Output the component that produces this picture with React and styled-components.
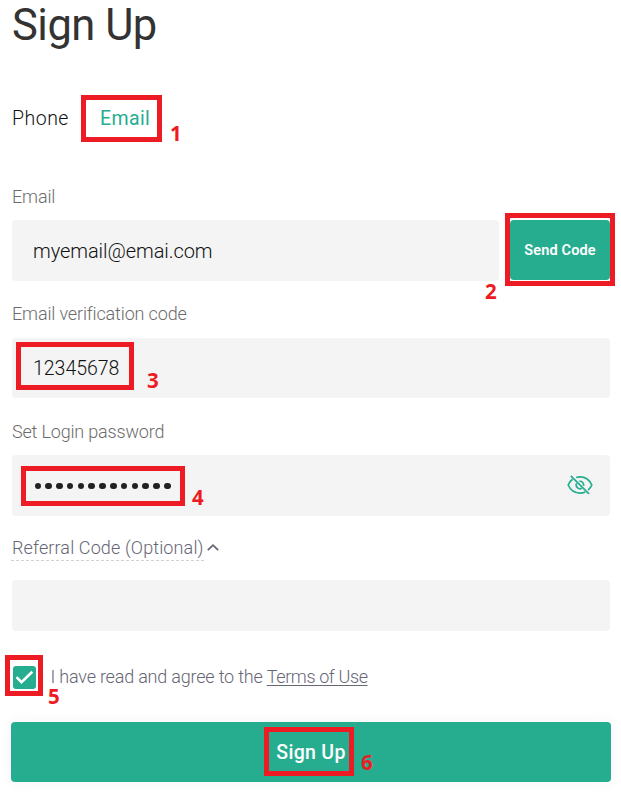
import React from "react";
import styled, { createGlobalStyle } from "styled-components";

const GREEN = "#26ad8f";
const RED = "#ed1c24";

const GlobalStyle = createGlobalStyle`
  * { box-sizing: border-box; }
  body { margin: 0; background: #fff; font-family: Roboto, "Liberation Sans", sans-serif; }
`;

const Page = styled.main`
  position: relative;
  width: 621px;
  height: 795px;
  padding: 0 11px 0 12px;
  overflow: hidden;
  display: flex;
  flex-direction: column;
`;

const Title = styled.h1`
  margin: 0;
  height: 96px;
  font-size: 43.5px;
  line-height: 52px;
  font-weight: 400;
  letter-spacing: -0.5px;
  color: #333;
  white-space: nowrap;
`;

const Tabs = styled.nav`
  display: flex;
  gap: 31px;
  height: 89px;
`;

const Tab = styled.span`
  font-size: 19.5px;
  line-height: 46px;
  font-weight: ${(p) => (p.$active ? 400 : 300)};
  letter-spacing: ${(p) => (p.$active ? "0.4px" : "0.5px")};
  color: ${(p) => (p.$active ? GREEN : "#111")};
`;

const Label = styled.label`
  display: block;
  height: ${(p) => p.$height || 35}px;
  font-size: 18px;
  line-height: 24px;
  font-weight: 300;
  letter-spacing: ${(p) => p.$spacing || "-0.15px"};
  color: #6c6c6c;
  white-space: nowrap;
`;

const Row = styled.div`
  display: flex;
  gap: 11px;
  height: 61px;
  margin-bottom: 21px;
`;

const Field = styled.div`
  display: flex;
  align-items: center;
  justify-content: space-between;
  flex: ${(p) => (p.$grow ? 1 : "none")};
  height: ${(p) => p.$height || 61}px;
  margin-bottom: ${(p) => p.$gap || 0}px;
  padding: 1px 17px 0 21px;
  border-radius: 4px;
  background: #f4f4f4;
  color: #111;
  font-size: ${(p) => p.$size || 20}px;
  font-weight: 300;
  letter-spacing: ${(p) => p.$spacing || "0px"};
`;

const Button = styled.button`
  border: 0;
  padding: 0;
  border-radius: 4px;
  background: ${GREEN};
  color: #fff;
  font-family: inherit;
  font-weight: 500;
`;

const SendButton = styled(Button)`
  width: 100px;
  height: 60px;
  font-size: 14.5px;
  font-weight: 600;
  letter-spacing: 0.15px;
`;

const SubmitButton = styled(Button)`
  width: 600px;
  height: 60px;
  margin-left: -1px;
  flex: none;
  font-size: 19.5px;
  letter-spacing: 0.3px;
  box-shadow: 0 0 14px rgba(0, 0, 0, 0.05);
`;

const Dots = styled.span`
  display: flex;
  gap: 4.3px;
  padding-left: 1.5px;
`;

const Dot = styled.i`
  width: 6.5px;
  height: 6.5px;
  border-radius: 50%;
  background: #222;
`;

const EyeIcon = styled.svg`
  margin-bottom: 2px;
`;

const Referral = styled.div`
  display: flex;
  align-items: flex-start;
  height: 44px;
  gap: 3px;
  color: #666675;
`;

const ReferralText = styled.span`
  height: 25px;
  margin-left: -1px;
  padding-left: 1px;
  width: 193px;
  font-size: 18px;
  line-height: 24px;
  font-weight: 300;
  letter-spacing: 0.13px;
  white-space: nowrap;
  border-bottom: 1px dashed #d0d0d6;
`;

const Chevron = styled.svg`
  margin-top: 6px;
`;

const Agreement = styled.div`
  display: flex;
  align-items: center;
  height: 24px;
  margin: 34px 0 33px;
  color: #666675;
  font-size: 18px;
  line-height: 18px;
  font-weight: 300;
  letter-spacing: -0.2px;
  white-space: pre;
`;

const Check = styled.span`
  display: grid;
  place-items: center;
  width: 23px;
  height: 23px;
  margin: 0 14.5px 0 1px;
  border-radius: 3px;
  background: ${GREEN};
`;

const Terms = styled.a`
  letter-spacing: -0.38px;
  text-decoration: underline;
  text-decoration-thickness: 1px;
  text-underline-offset: 2px;
  text-decoration-skip-ink: none;
`;

/* Tutorial markers laid over the form. */
const Highlight = styled.span`
  position: absolute;
  left: ${(p) => p.$x}px;
  top: ${(p) => p.$y}px;
  width: ${(p) => p.$w}px;
  height: ${(p) => p.$h}px;
  border: 5px solid ${RED};
`;

const Step = styled.b`
  position: absolute;
  left: ${(p) => p.$x}px;
  top: ${(p) => p.$y}px;
  font: 700 20.5px/20px "Noto Sans", sans-serif;
  color: ${RED};
`;

const markers = [
  { box: [81, 95, 81, 47], num: [170, 123] },
  { box: [505, 213, 110, 73], num: [485, 281] },
  { box: [16, 342, 118, 48], num: [147, 370] },
  { box: [21, 466, 164, 40], num: [192, 487] },
  { box: [5, 655, 38, 41], num: [48, 686] },
  { box: [264, 727, 90, 49], num: [361, 752] },
];

const HiddenEye = () => (
  <EyeIcon width="26" height="22" viewBox="0 0 26 22" fill="none" stroke={GREEN} strokeWidth="1.7">
    <path d="M5.5 5.3C3.5 6.8 2 9 1.2 11 3.5 16.3 8 19.1 13 19.1c2 0 3.8-.4 5.3-1.2M9.2 3.5A12 12 0 0 1 13 2.9c5 0 9.5 2.8 11.8 8.1-.7 1.8-1.9 3.6-3.7 5" />
    <path d="M9.6 9.3a3.8 3.8 0 0 0 5.2 5M12.3 7.3a3.8 3.8 0 0 1 4.3 4.6" />
    <path d="M3.8 1.8 22 19.8" />
  </EyeIcon>
);

export default function App() {
  return (
    <Page>
      <GlobalStyle />
      <Title>Sign Up</Title>
      <Tabs>
        <Tab>Phone</Tab>
        <Tab $active>Email</Tab>
      </Tabs>

      <Label>Email</Label>
      <Row>
        <Field $grow $spacing="-0.06px">myemail@emai.com</Field>
        <SendButton>Send Code</SendButton>
      </Row>

      <Label $height={36}>Email verification code</Label>
      <Field $height={60} $gap={22} $size={19.5} $spacing="-0.02px">12345678</Field>

      <Label $spacing="-0.18px">Set Login password</Label>
      <Field $gap={20}>
        <Dots>
          {Array.from({ length: 13 }, (_, i) => <Dot key={i} />)}
        </Dots>
        <HiddenEye />
      </Field>

      <Referral>
        <ReferralText>Referral Code (Optional)</ReferralText>
        <Chevron width="12" height="10" viewBox="0 0 12 10" fill="none" stroke="currentColor" strokeWidth="1.8">
          <path d="m.8 8.2 5.2-5 5.2 5" />
        </Chevron>
      </Referral>
      <Field $height={51} />

      <Agreement>
        <Check>
          <svg width="19" height="15" viewBox="0 0 19 15" fill="none" stroke="#fff" strokeWidth="2.6">
            <path d="m1.5 7.2 5 5L17.3 1.8" />
          </svg>
        </Check>
        I have read and agree to the <Terms>Terms of Use</Terms>
      </Agreement>
      <SubmitButton>Sign Up</SubmitButton>

      {markers.map(({ box: [x, y, w, h], num: [nx, ny] }, i) => (
        <React.Fragment key={i}>
          <Highlight $x={x} $y={y} $w={w} $h={h} />
          <Step $x={nx} $y={ny}>{i + 1}</Step>
        </React.Fragment>
      ))}
    </Page>
  );
}
